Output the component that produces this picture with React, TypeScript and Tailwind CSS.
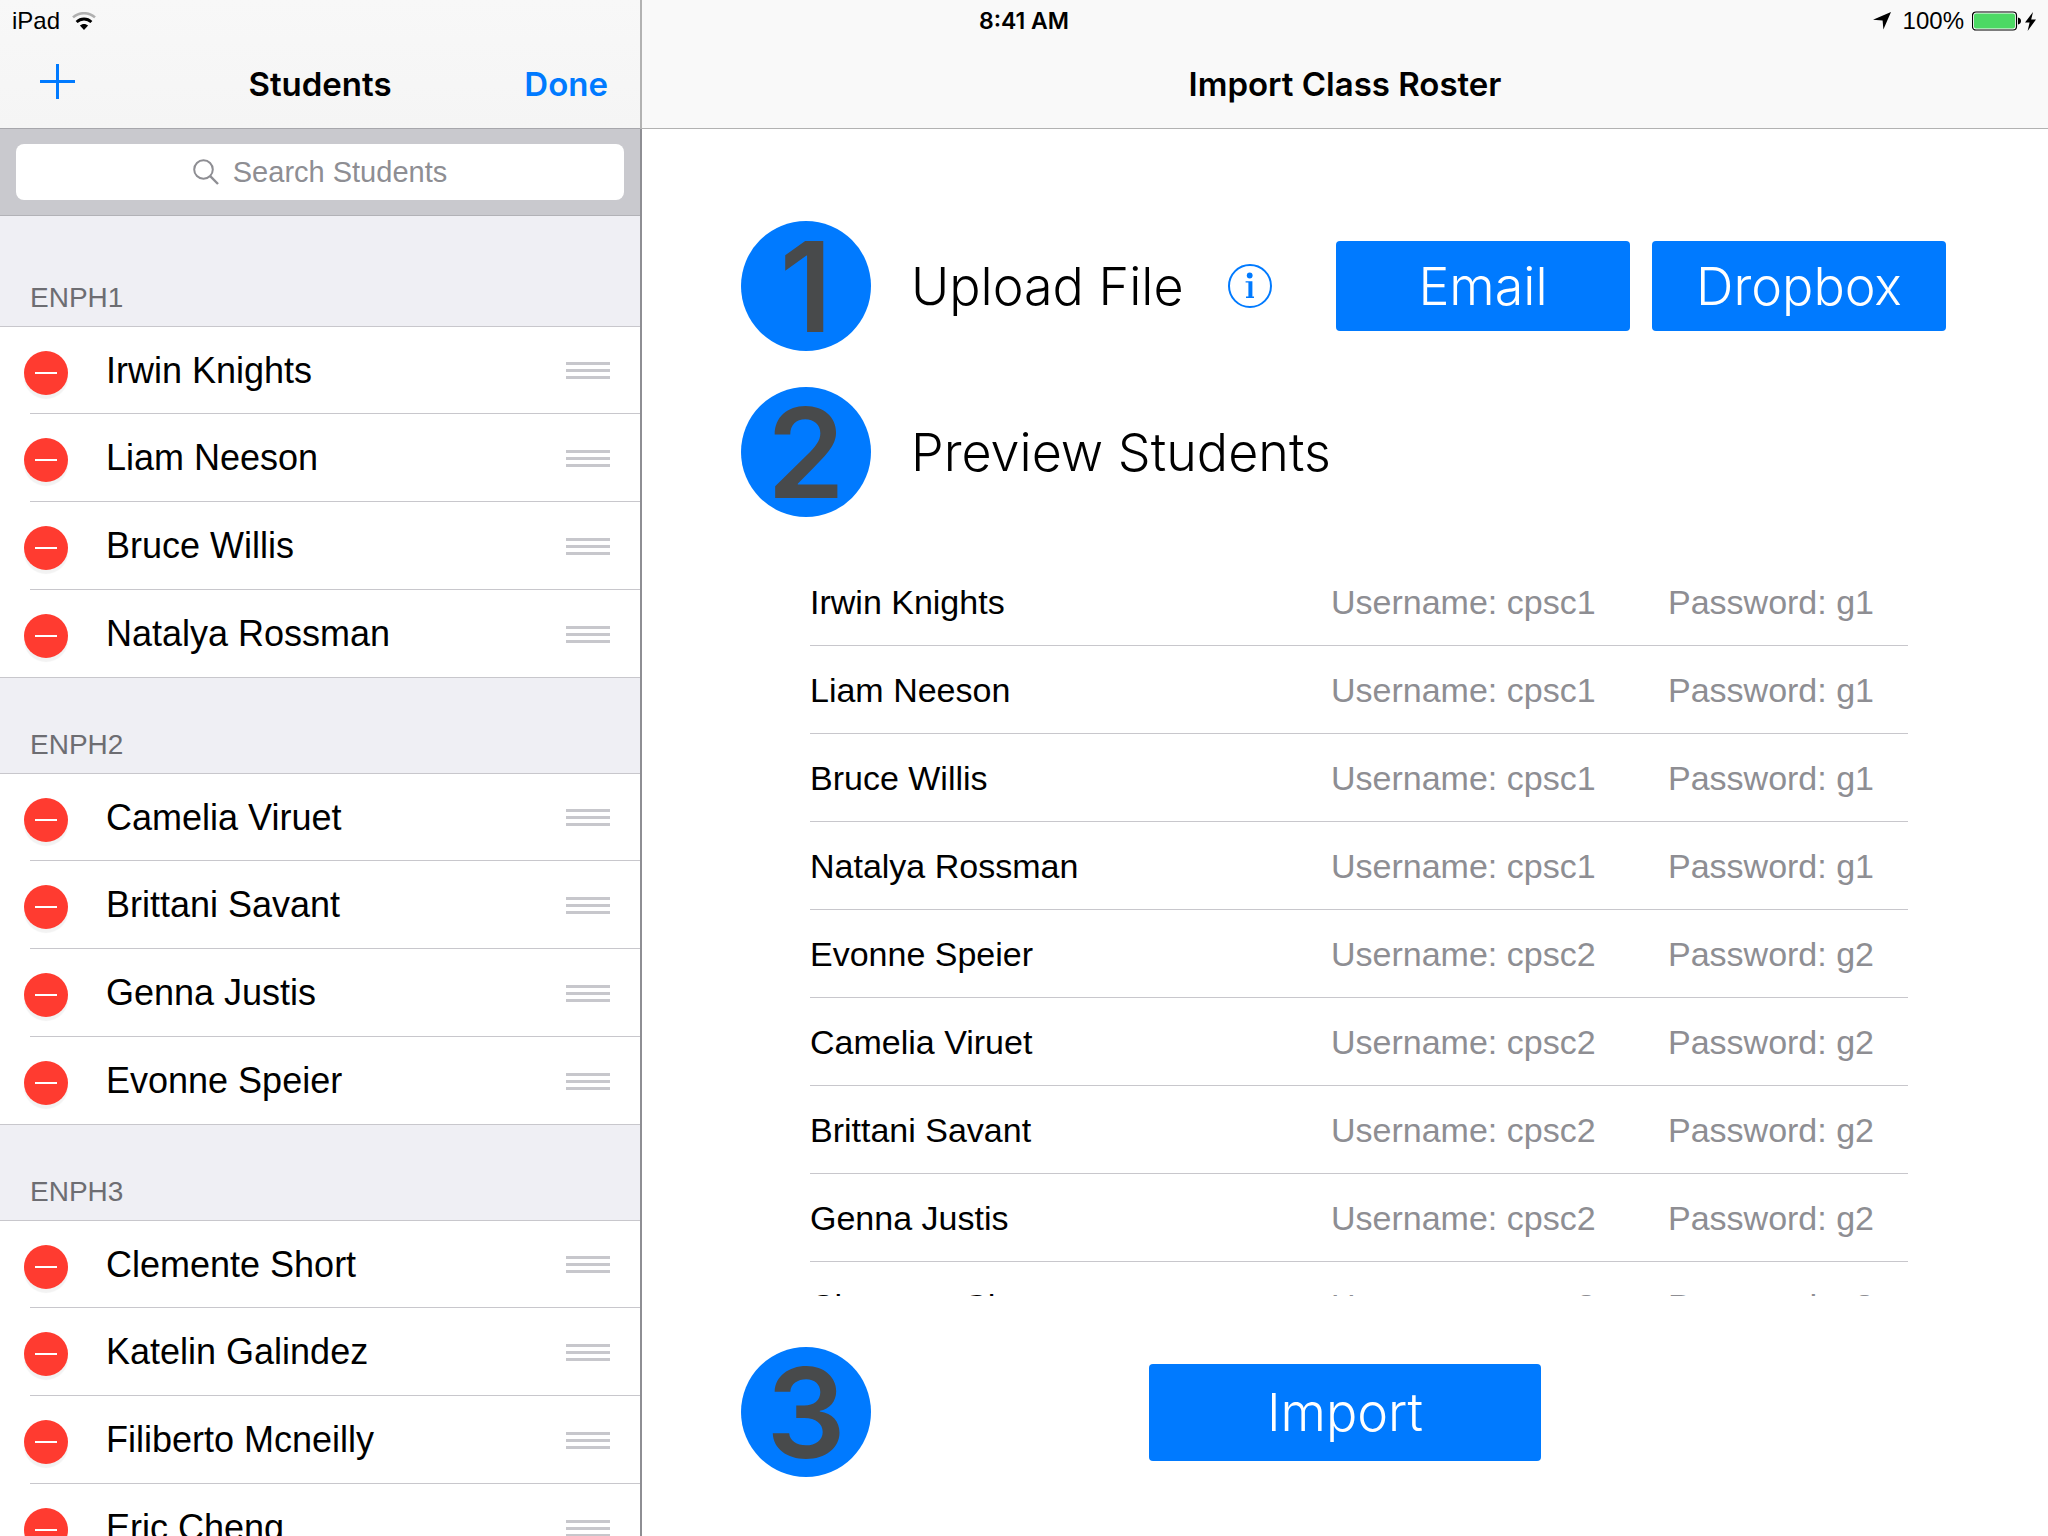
import type { ReactNode } from "react";

type Section = { title: string; students: string[] };

const sections: Section[] = [
  { title: "ENPH1", students: ["Irwin Knights", "Liam Neeson", "Bruce Willis", "Natalya Rossman"] },
  { title: "ENPH2", students: ["Camelia Viruet", "Brittani Savant", "Genna Justis", "Evonne Speier"] },
  { title: "ENPH3", students: ["Clemente Short", "Katelin Galindez", "Filiberto Mcneilly", "Eric Cheng"] },
];

const roster = [
  { name: "Irwin Knights", username: "cpsc1", password: "g1" },
  { name: "Liam Neeson", username: "cpsc1", password: "g1" },
  { name: "Bruce Willis", username: "cpsc1", password: "g1" },
  { name: "Natalya Rossman", username: "cpsc1", password: "g1" },
  { name: "Evonne Speier", username: "cpsc2", password: "g2" },
  { name: "Camelia Viruet", username: "cpsc2", password: "g2" },
  { name: "Brittani Savant", username: "cpsc2", password: "g2" },
  { name: "Genna Justis", username: "cpsc2", password: "g2" },
  { name: "Clemente Short", username: "cpsc3", password: "g3" },
];

function WifiIcon() {
  return (
    <svg width="24" height="18" viewBox="0 0 24 18" fill="none" aria-hidden="true">
      <path d="M1 5.4C7.2 -0.2 16.8 -0.2 23 5.4" stroke="#b0b0b0" strokeWidth="2.6" />
      <path d="M4.6 10C8.8 6 15.2 6 19.4 10" stroke="#000" strokeWidth="2.8" />
      <path d="M12 18L7.9 13.6C10.2 11.4 13.8 11.4 16.1 13.6Z" fill="#000" />
    </svg>
  );
}

function LocationIcon() {
  return (
    <svg width="18" height="18" viewBox="0 0 18 18" aria-hidden="true">
      <path d="M18 0L10.4 17.6L9.6 8.6L0 7.8Z" fill="#000" />
    </svg>
  );
}

function BatteryIcon() {
  return (
    <svg width="49" height="20" viewBox="0 0 49 20" aria-hidden="true">
      <rect x="0.5" y="1" width="44" height="18" rx="3.5" fill="#fff" stroke="#000" strokeWidth="1.2" />
      <rect x="2" y="2.5" width="41" height="15" rx="2" fill="#4cd964" />
      <path d="M46 6.5C50 7 50 13 46 13.5Z" fill="#000" />
    </svg>
  );
}

function BoltIcon() {
  return (
    <svg width="11" height="19" viewBox="0 0 11 19" aria-hidden="true">
      <path d="M8 0L0 10.6H4.6L2.6 19L11 7.6H6.2Z" fill="#000" />
    </svg>
  );
}

function StatusBar() {
  return (
    <div className="absolute inset-x-0 top-0 z-10 grid h-[42px] grid-cols-3 items-center pr-3 pl-3 text-2xl/10">
      <div className="flex items-center gap-3">
        <span>iPad</span>
        <WifiIcon />
      </div>
      <div className="text-center font-[Inter,sans-serif] text-[23px] font-semibold">8:41 AM</div>
      <div className="flex items-center justify-end">
        <LocationIcon />
        <span className="ml-3">100%</span>
        <span className="ml-2 flex items-center gap-1">
          <BatteryIcon />
          <BoltIcon />
        </span>
      </div>
    </div>
  );
}

function StudentRow({ name, last }: { name: string; last: boolean }) {
  return (
    <li className="relative flex h-22 items-center border-[#c8c7cc] pr-[30px] pl-6 first:border-t">
      <button
        type="button"
        aria-label={`Remove ${name}`}
        className="mt-1 flex size-11 shrink-0 items-center justify-center rounded-full bg-[#ff3b30] shadow-[0_4px_1px_rgba(0,0,0,0.05)]"
      >
        <span className="h-0.5 w-[22px] bg-white" />
      </button>
      <span className="ml-[38px] flex-1 text-4xl/10">{name}</span>
      <button type="button" aria-label={`Reorder ${name}`} className="flex flex-col gap-1">
        <span className="h-[3px] w-11 bg-[#c7c7cc]" />
        <span className="h-[3px] w-11 bg-[#c7c7cc]" />
        <span className="h-[3px] w-11 bg-[#c7c7cc]" />
      </button>
      <span className={`absolute right-0 bottom-0 h-px bg-[#c8c7cc] ${last ? "left-0" : "left-[30px]"}`} />
    </li>
  );
}

function Sidebar() {
  return (
    <aside className="flex w-[640px] shrink-0 flex-col overflow-hidden bg-[#efeff4]">
      <header className="grid h-[129px] shrink-0 grid-cols-3 items-center border-b border-[#a7a7ac] bg-linear-to-b from-[#f8f8f8] to-[#f5f5f5] px-8 pt-10 font-[Inter,sans-serif] text-[33px]/10 font-semibold">
        <button type="button" aria-label="Add student" className="ml-2 justify-self-start pb-1.5">
          <svg width="35" height="35" viewBox="0 0 35 35" aria-hidden="true">
            <path d="M17.5 0V35M0 17.5H35" stroke="#007aff" strokeWidth="3" />
          </svg>
        </button>
        <h1 className="text-center">Students</h1>
        <button type="button" className="justify-self-end text-[#007aff]">
          Done
        </button>
      </header>
      <div className="shrink-0 border-b border-[#b2b2b7] bg-[#c9c9ce] px-4 py-[15px]">
        <label className="flex h-14 items-center justify-center gap-3.5 rounded-lg bg-white">
          <svg width="26" height="26" viewBox="0 0 26 26" fill="none" stroke="#8e8e93" strokeWidth="2" aria-hidden="true">
            <circle cx="10.5" cy="10.5" r="9.3" />
            <path d="M17.2 17.2L25 25" strokeWidth="2.4" />
          </svg>
          <input
            type="text"
            aria-label="Search Students"
            placeholder="Search Students"
            className="field-sizing-content bg-transparent text-[29px]/9 outline-none placeholder:text-[#8e8e93]"
          />
        </label>
      </div>
      <div className="min-h-0 flex-1 overflow-hidden">
        {sections.map((section, i) => (
          <section key={section.title}>
            <h2
              className={`flex items-end px-[30px] pb-2.5 text-[28px]/9 text-[#6d6d72] ${i === 0 ? "h-[110px]" : "h-[95px]"}`}
            >
              {section.title}
            </h2>
            <ul className="bg-white">
              {section.students.map((name, j) => (
                <StudentRow key={name} name={name} last={j === section.students.length - 1} />
              ))}
            </ul>
          </section>
        ))}
      </div>
    </aside>
  );
}

function StepBadge({ children }: { children: ReactNode }) {
  return (
    <span className="flex size-[130px] shrink-0 items-center justify-center rounded-full bg-[#007aff] pt-0.5 font-[Inter,sans-serif] text-[125px]/[128px] font-semibold text-[#484a4b]">
      {children}
    </span>
  );
}

function StepTitle({ children }: { children: ReactNode }) {
  return <h2 className="ml-10 pt-0.5 font-[Inter,sans-serif] text-[52px]/[64px] font-light">{children}</h2>;
}

function ActionButton({ className, children }: { className: string; children: ReactNode }) {
  return (
    <button
      type="button"
      className={`rounded-sm bg-[#007aff] pt-0.5 font-[Inter,sans-serif] text-[52px]/[64px] font-light text-white ${className}`}
    >
      {children}
    </button>
  );
}

function RosterTable() {
  return (
    <table className="w-full table-fixed text-left text-[34px]/10">
      <colgroup>
        <col />
        <col className="w-[337px]" />
        <col className="w-[240px]" />
      </colgroup>
      <tbody>
        {roster.map((row) => (
          <tr key={row.name} className="h-22 border-b border-[#c8c7cc]">
            <th scope="row" className="p-0 pt-0.5 font-normal">
              {row.name}
            </th>
            <td className="p-0 pt-0.5 text-[#8e8e93]">Username: {row.username}</td>
            <td className="p-0 pt-0.5 text-[#8e8e93]">Password: {row.password}</td>
          </tr>
        ))}
      </tbody>
    </table>
  );
}

function ImportPanel() {
  return (
    <main className="flex min-w-0 flex-1 flex-col bg-white">
      <header className="h-[129px] shrink-0 border-b border-[#b2b2b2] bg-[#f9f9f9] pt-16 text-center font-[Inter,sans-serif] text-[33px]/10 font-semibold">
        <h1>Import Class Roster</h1>
      </header>
      <div className="flex min-h-0 flex-1 flex-col px-[99px] pt-[92px] pb-[59px]">
        <div className="flex items-center">
          <StepBadge>1</StepBadge>
          <StepTitle>Upload File</StepTitle>
          <button type="button" aria-label="File format help" className="ml-11">
            <svg width="44" height="44" viewBox="0 0 44 44" fill="none" aria-hidden="true">
              <circle cx="22" cy="22" r="21" stroke="#007aff" strokeWidth="2" />
              <circle cx="21.7" cy="11.5" r="2.9" fill="#007aff" />
              <path d="M17.6 17.2H24.4V32.6H26V34H18V32.6H20.4V18.6H17.6Z" fill="#007aff" />
            </svg>
          </button>
          <div className="mr-[3px] ml-auto flex gap-[22px]">
            <ActionButton className="h-[90px] w-[294px]">Email</ActionButton>
            <ActionButton className="h-[90px] w-[294px]">Dropbox</ActionButton>
          </div>
        </div>
        <div className="mt-9 flex items-center">
          <StepBadge>2</StepBadge>
          <StepTitle>Preview Students</StepTitle>
        </div>
        <div className="mt-10 mr-[41px] mb-[51px] ml-[69px] min-h-0 flex-1 overflow-hidden">
          <RosterTable />
        </div>
        <div className="grid grid-cols-[1fr_auto_1fr] items-center">
          <StepBadge>3</StepBadge>
          <ActionButton className="h-[97px] w-[392px]">Import</ActionButton>
        </div>
      </div>
    </main>
  );
}

export default function App() {
  return (
    <div className="relative flex h-screen overflow-hidden font-['Liberation_Sans',Arial,sans-serif] text-black">
      <StatusBar />
      <Sidebar />
      <div className="flex w-0.5 shrink-0 flex-col bg-[#8e8e93]">
        <span className="h-[129px] bg-[#b2b2b2]" />
      </div>
      <ImportPanel />
    </div>
  );
}
